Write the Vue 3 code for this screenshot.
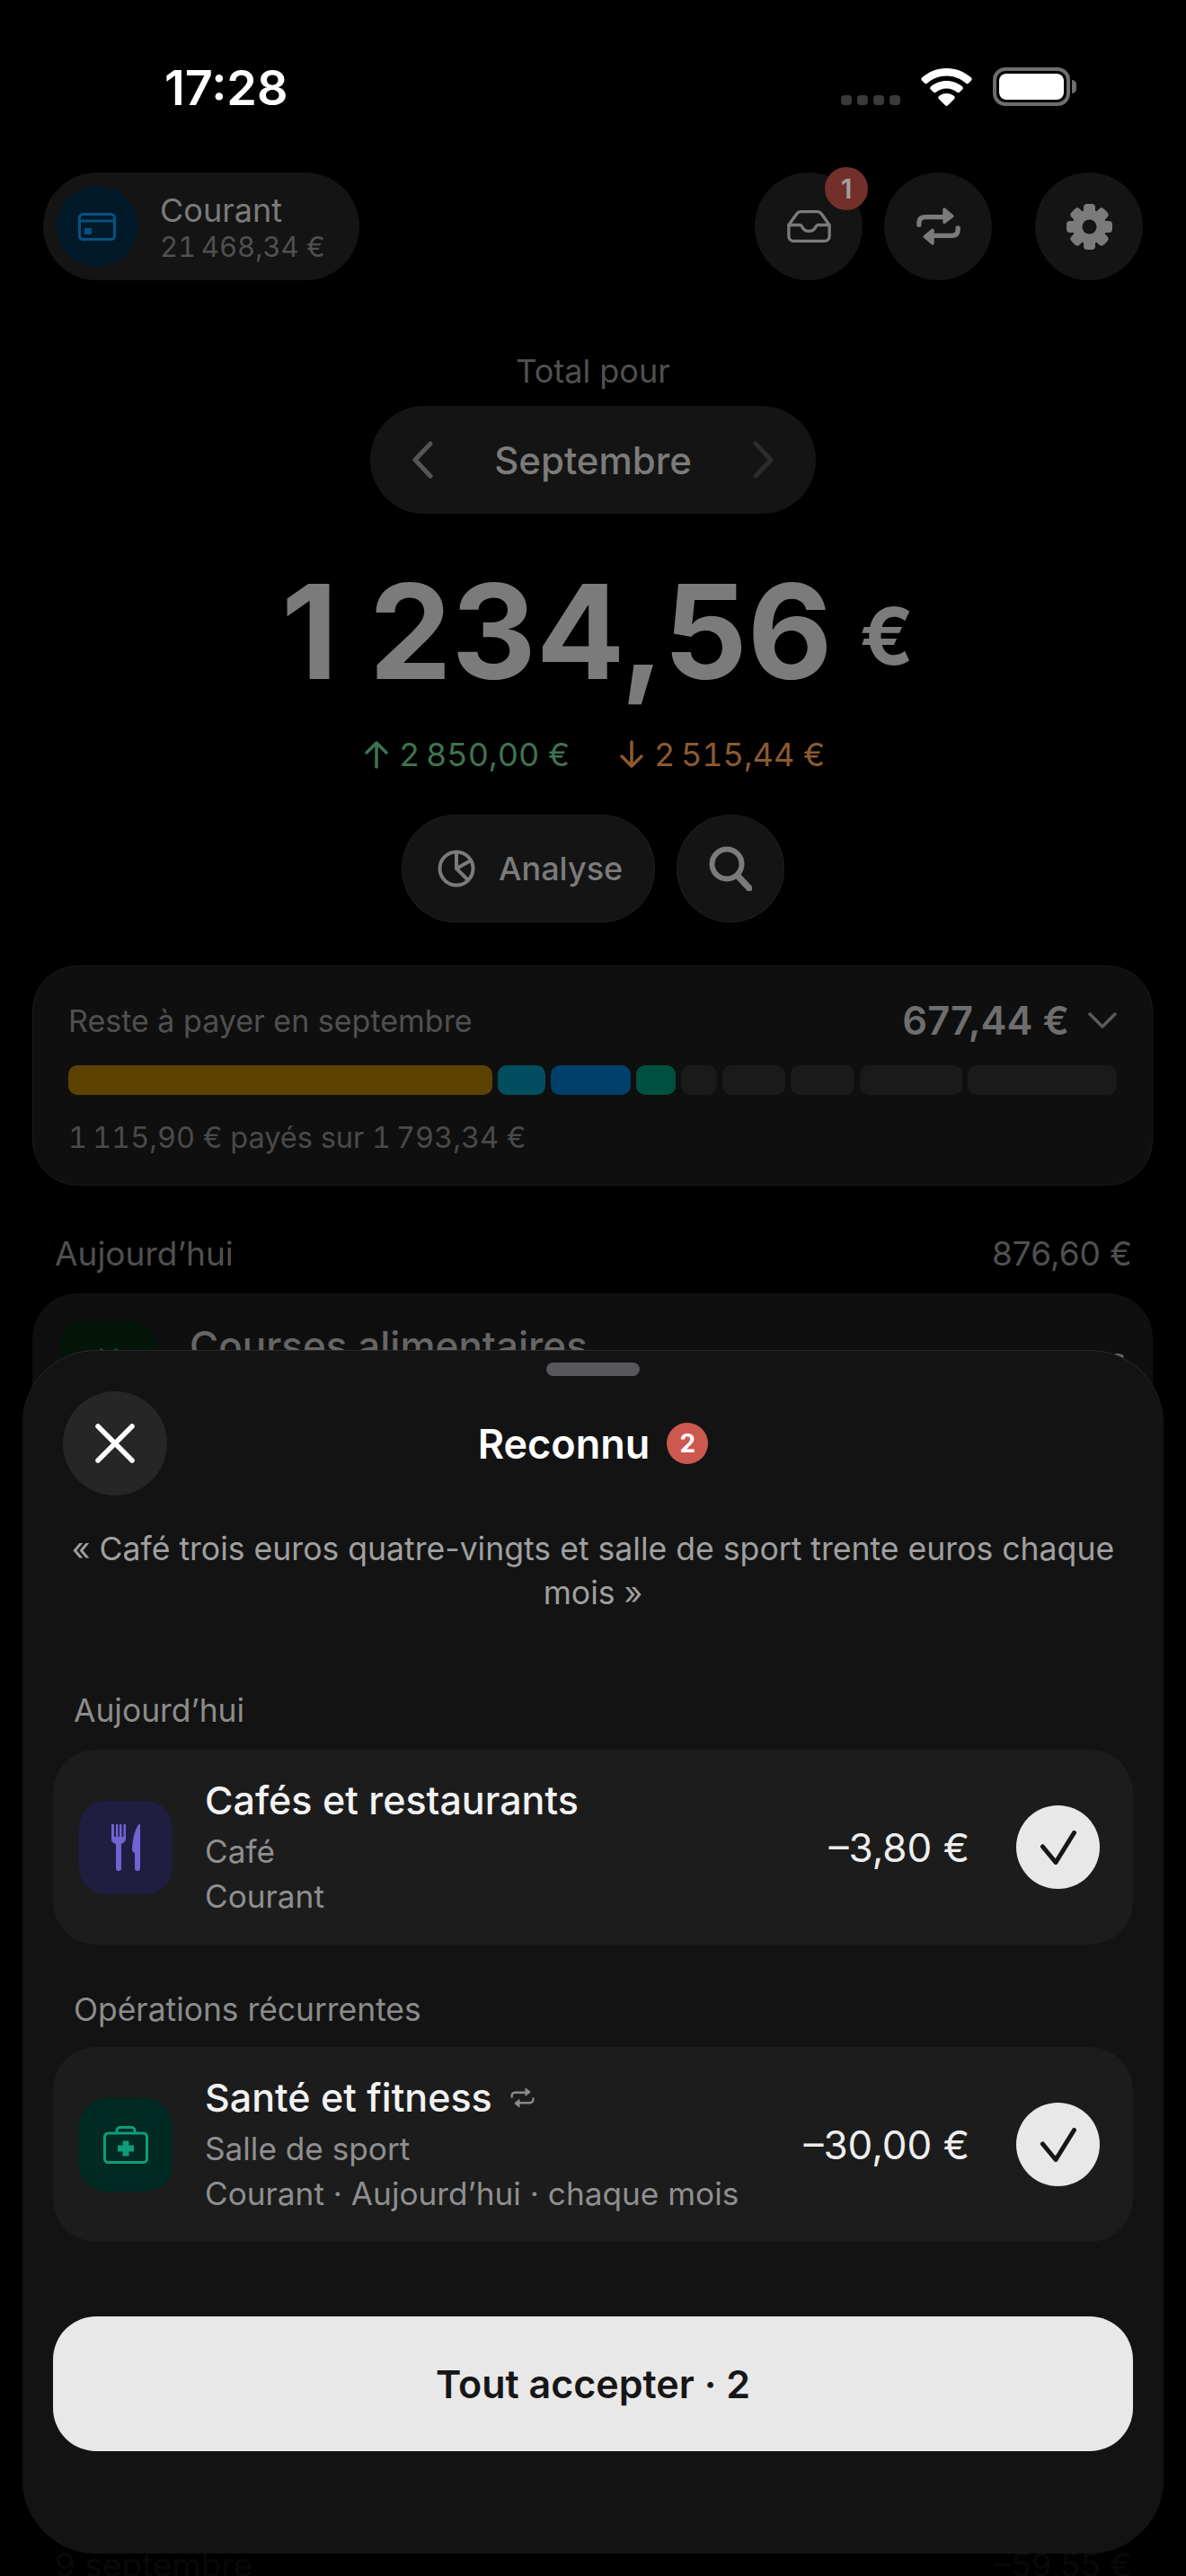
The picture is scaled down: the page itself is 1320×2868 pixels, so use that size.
<template>
  <div class="page">
    <div class="status">
      <span class="status__time">17:28</span>
      <div class="status__right">
        <div class="status__dots"><i /><i /><i /><i /></div>
        <svg class="status__wifi" viewBox="0 0 57 42" fill="#fff">
          <path d="M28.500 0C18 0 8.400 4 1 10.600c-.9.800-.9 2-.1 2.800l3.200 3.300c.8.800 2 .8 2.800.1C12.800 11.700 20.300 8.600 28.500 8.600s15.700 3.100 21.600 8.200c.8.700 2 .7 2.800-.1l3.200-3.300c.8-.8.800-2-.1-2.800C48.600 4 39 0 28.500 0z" />
          <path d="M28.500 14c-6.700 0-12.900 2.400-17.700 6.500-.9.800-.9 2.100-.1 2.900l3.200 3.200c.8.800 2 .8 2.800.2 3.200-2.600 7.300-4.200 11.800-4.200s8.600 1.600 11.800 4.200c.8.600 2 .6 2.800-.2l3.200-3.200c.8-.8.800-2.100-.1-2.900C41.400 16.400 35.200 14 28.500 14z" />
          <path d="M28.500 28c-3.200 0-6.200 1.100-8.500 3-.9.800-1 2.100-.2 2.900l7.200 7.400c.8.900 2.200.9 3 0l7.200-7.400c.8-.8.700-2.100-.2-2.900-2.300-1.900-5.300-3-8.500-3z" />
        </svg>
        <div class="status__battery"><div class="status__level" /></div>
      </div>
    </div>

    <header class="top">
      <div class="account">
        <div class="account__icon">
          <svg viewBox="0 0 42 31" width="42" height="31" fill="none" stroke="#05527f" stroke-width="3">
            <rect x="1.500" y="1.500" width="39" height="28" rx="4" />
            <path d="M2 9h38" />
            <rect x="7" y="17" width="8" height="7" rx="1" fill="#05527f" stroke="none" />
          </svg>
        </div>
        <div class="account__text">
          <span class="account__name">Courant</span>
          <span class="account__sum">21&#8239;468,34 €</span>
        </div>
      </div>
      <div class="top__actions">
        <button class="round round--inbox">
          <svg viewBox="0 0 147 109" width="49" height="36" fill="none" stroke="#7b7b7b" stroke-width="10" stroke-linejoin="round" stroke-linecap="round">
            <path d="M5 50 32 12a16 16 0 0 1 13-7h57a16 16 0 0 1 13 7l27 38v38a16 16 0 0 1-16 16H21A16 16 0 0 1 5 88z" />
            <path d="M5 50h37c4 0 6 2 8 6 4 9 12 15 23 15s19-6 23-15c2-4 4-6 8-6h37" />
          </svg>
          <span class="round__badge">1</span>
        </button>
        <button class="round">
          <svg viewBox="0 0 147 127" width="49" height="42" fill="#7b7b7b" stroke="#7b7b7b" stroke-linecap="round" stroke-linejoin="round">
            <path d="M8 58V52Q8 32 30 32H95" fill="none" stroke-width="16" />
            <path d="M93 6 120 29 93 50z" stroke-width="10" />
            <path d="M139 69v6Q139 95 117 95H52" fill="none" stroke-width="16" />
            <path d="M54 76 27 98 54 121z" stroke-width="10" />
          </svg>
        </button>
        <button class="round round--gear">
          <svg viewBox="-25.500 -25.500 51 51" width="51" height="51" fill="#7b7b7b">
            <circle r="19" />
            <rect
              v-for="deg in gearTeeth"
              :key="deg"
              x="-6.500"
              y="-25.500"
              width="13"
              height="13"
              rx="4"
              :transform="`rotate(${deg})`"
            />
            <circle r="8" fill="#141414" />
          </svg>
        </button>
      </div>
    </header>

    <section class="total">
      <div class="total__label">Total pour</div>
      <div class="month">
        <svg viewBox="0 0 24 44" width="24" height="44" fill="none" stroke="#555" stroke-width="5" stroke-linecap="round" stroke-linejoin="round"><path d="M21 4 4 22l17 18" /></svg>
        <span class="month__name">Septembre</span>
        <svg viewBox="0 0 24 44" width="24" height="44" fill="none" stroke="#2c2c2c" stroke-width="5" stroke-linecap="round" stroke-linejoin="round"><path d="M3 4l17 18L3 40" /></svg>
      </div>
      <div class="amount">
        <span class="amount__value">1 234,56</span>
        <span class="amount__cur">€</span>
      </div>
      <div class="flows">
        <span class="flow flow--in">
          <svg viewBox="0 0 26 32" width="26" height="32" fill="none" stroke="currentColor" stroke-width="3.500" stroke-linecap="round" stroke-linejoin="round"><path d="M13 30V3M2 14 13 3l11 11" /></svg>
          2&#8239;850,00 €
        </span>
        <span class="flow flow--out">
          <svg viewBox="0 0 26 32" width="26" height="32" fill="none" stroke="currentColor" stroke-width="3.500" stroke-linecap="round" stroke-linejoin="round"><path d="M13 2v27M2 18l11 11 11-11" /></svg>
          2&#8239;515,44 €
        </span>
      </div>
      <div class="tools">
        <button class="tool">
          <svg viewBox="0 0 42 42" width="42" height="42" fill="none" stroke="#7b7b7b" stroke-width="4" stroke-linejoin="round">
            <circle cx="21" cy="21" r="18.500" />
            <path d="M21 3v18l13 13M21 21 37 12" />
          </svg>
          <span>Analyse</span>
        </button>
        <button class="round round--line">
          <svg viewBox="0 0 48 50" width="48" height="50" fill="none" stroke="#7b7b7b" stroke-width="6" stroke-linecap="round">
            <circle cx="20" cy="20" r="16.500" />
            <path d="M32 33l13 14" stroke-width="7" />
          </svg>
        </button>
      </div>
    </section>

    <section class="bills">
      <div class="bills__head">
        <span class="bills__label">Reste à payer en septembre</span>
        <span class="bills__sum">677,44 €</span>
        <svg viewBox="0 0 32 20" width="32" height="20" fill="none" stroke="#5c5c5c" stroke-width="3.500" stroke-linecap="round" stroke-linejoin="round"><path d="M2 3l14 14L30 3" /></svg>
      </div>
      <div class="bills__bar">
        <span
          v-for="seg in segments"
          :key="seg.w + seg.color"
          class="bills__seg"
          :style="{ width: seg.w + 'px', background: seg.color }"
        />
      </div>
      <div class="bills__foot">1&#8239;115,90 € payés sur 1&#8239;793,34 €</div>
    </section>

    <div class="day">
      <span>Aujourd’hui</span>
      <span>876,60 €</span>
    </div>
    <section class="list">
      <div class="list__row">
        <div class="list__icon">
          <svg viewBox="0 0 20 50" width="20" height="50" fill="none" stroke="#0b5228" stroke-width="4" stroke-linecap="round"><path d="M2 3v4M18 3v4" /></svg>
        </div>
        <span class="list__title">Courses alimentaires</span>
        <span class="list__sum">€</span>
      </div>
    </section>
    <div class="day day--under">
      <span>9 septembre</span>
      <span>–59,55 €</span>
    </div>

    <!-- bottom sheet, sits over the page -->
    <div class="sheet">
      <div class="sheet__handle" />
      <div class="sheet__head">
        <button class="sheet__close">
          <svg viewBox="0 0 44 44" width="44" height="44" fill="none" stroke="#fff" stroke-width="5.500" stroke-linecap="round"><path d="M3 3l38 38M41 3 3 41" /></svg>
        </button>
        <div class="sheet__title">
          <span>Reconnu</span>
          <span class="sheet__count">2</span>
        </div>
      </div>
      <p class="sheet__quote">« Café trois euros quatre-vingts et salle de sport trente euros chaque mois »</p>

      <div class="sheet__section">Aujourd’hui</div>
      <div class="op">
        <div class="op__icon op__icon--food">
          <svg viewBox="0 0 32 52" width="32" height="52" fill="#7063d3">
            <path d="M0 1a1 1 0 0 1 3 0v13h2V1a1 1 0 0 1 2.500 0v13h1.500V1a1 1 0 0 1 2.500 0v13h2V1a1 1 0 0 1 2.500 0v15c0 3-2 5-5 6v27a3 3 0 0 1-6 0V22c-3-1-5.500-3-5.500-6z" />
            <path d="M32 1v48a3 3 0 0 1-6 0V32c-2-.5-3-2-3-4 0-8 3-23 7.500-28 .8-.6 1.500 0 1.500 1z" />
          </svg>
        </div>
        <div class="op__text">
          <div class="op__title">Cafés et restaurants</div>
          <div class="op__line">Café</div>
          <div class="op__line">Courant</div>
        </div>
        <div class="op__sum">–3,80 €</div>
        <div class="op__check">
          <svg viewBox="0 0 40 38" width="40" height="38" fill="none" stroke="#161616" stroke-width="5" stroke-linecap="round" stroke-linejoin="round"><path d="M2.500 18 17 35.500 37.500 2.500" /></svg>
        </div>
      </div>

      <div class="sheet__section sheet__section--next">Opérations récurrentes</div>
      <div class="op">
        <div class="op__icon op__icon--health">
          <svg viewBox="0 0 50 42" width="50" height="42" fill="none" stroke="#0f9c7a" stroke-width="3">
            <rect x="1.500" y="8" width="47" height="32.500" rx="4" />
            <path d="M15 8V5a3.500 3.500 0 0 1 3.500-3.500h13A3.500 3.500 0 0 1 35 5v3" />
            <path d="M25 16.500v17M16 25h18" stroke-width="7" />
          </svg>
        </div>
        <div class="op__text">
          <div class="op__title">
            Santé et fitness
            <svg class="op__repeat" viewBox="0 0 147 127" width="27" height="23" fill="#8a8a8a" stroke="#8a8a8a" stroke-linecap="round" stroke-linejoin="round">
              <path d="M8 58V52Q8 32 30 32H95" fill="none" stroke-width="13" />
              <path d="M93 6 120 29 93 50z" stroke-width="6" />
              <path d="M139 69v6Q139 95 117 95H52" fill="none" stroke-width="13" />
              <path d="M54 76 27 98 54 121z" stroke-width="6" />
            </svg>
          </div>
          <div class="op__line">Salle de sport</div>
          <div class="op__line">Courant · Aujourd’hui · chaque mois</div>
        </div>
        <div class="op__sum">–30,00 €</div>
        <div class="op__check">
          <svg viewBox="0 0 40 38" width="40" height="38" fill="none" stroke="#161616" stroke-width="5" stroke-linecap="round" stroke-linejoin="round"><path d="M2.500 18 17 35.500 37.500 2.500" /></svg>
        </div>
      </div>

      <button class="sheet__accept">Tout accepter · 2</button>
    </div>
  </div>
</template>

<script setup>
const gearTeeth = [0, 45, 90, 135, 180, 225, 270, 315]

const segments = [
  { w: 472, color: '#5c4200' },
  { w: 53, color: '#004e5f' },
  { w: 89, color: '#003f69' },
  { w: 44, color: '#005040' },
  { w: 40, color: '#1a1a1a' },
  { w: 70, color: '#1a1a1a' },
  { w: 71, color: '#1a1a1a' },
  { w: 114, color: '#1a1a1a' },
  { w: 166, color: '#1a1a1a' },
]
</script>

<style>
html, body {
  background: #000;
}
</style>

<style scoped>
.page {
  position: relative;
  width: 1320px;
  height: 2868px;
  overflow: hidden;
  background: #000;
  font-family: Inter, "Liberation Sans", sans-serif;
  color: #7b7b7b;
}

button {
  border: 0;
  padding: 0;
  font-family: inherit;
  cursor: pointer;
}

.status {
  display: flex;
  align-items: flex-start;
  justify-content: space-between;
  height: 192px;
  padding: 0 129px 0 183px;
  box-sizing: border-box;
}

.status__time {
  margin-top: 65px;
  font-size: 54px;
  line-height: 66px;
  font-weight: 600;
  color: #fff;
}

.status__right {
  display: flex;
  align-items: flex-end;
  margin-top: 75px;
}

.status__dots {
  display: flex;
  gap: 6px;
  margin-right: 23px;
  margin-bottom: 1px;
}

.status__dots i {
  width: 12px;
  height: 11px;
  border-radius: 4px;
  background: #3a3a3a;
}

.status__wifi {
  width: 57px;
  height: 42px;
}

.status__battery {
  position: relative;
  width: 86px;
  height: 43px;
  margin-left: 23px;
  box-sizing: border-box;
  border: 4px solid #6e6e6e;
  border-radius: 14px;
  padding: 3px;
}

.status__battery::after {
  content: "";
  position: absolute;
  right: -11px;
  top: 10px;
  width: 5px;
  height: 15px;
  border-radius: 0 5px 5px 0;
  background: #6e6e6e;
}

.status__level {
  height: 100%;
  border-radius: 8px;
  background: #fff;
}

.top {
  display: flex;
  justify-content: space-between;
  padding: 0 48px;
}

.account {
  display: flex;
  align-items: center;
  gap: 25px;
  width: 352px;
  height: 120px;
  box-sizing: border-box;
  padding-left: 15px;
  border-radius: 60px;
  background: #141414;
}

.account__icon {
  display: flex;
  align-items: center;
  justify-content: center;
  width: 90px;
  height: 90px;
  border-radius: 50%;
  background: #02192a;
}

.account__text {
  display: flex;
  flex-direction: column;
}

.account__name {
  font-size: 36px;
  line-height: 46px;
  color: #7b7b7b;
}

.account__sum {
  font-size: 31px;
  line-height: 36px;
  font-variant-numeric: tabular-nums;
  color: #505050;
}

.top__actions {
  display: flex;
}

.round {
  position: relative;
  display: flex;
  align-items: center;
  justify-content: center;
  width: 120px;
  height: 120px;
  border-radius: 50%;
  background: #141414;
}

.round--inbox {
  margin-right: 24px;
}

.round--gear {
  margin-left: 48px;
}

.round--line {
  box-shadow: inset 0 0 0 1px #1c1c1c;
}

.round__badge {
  position: absolute;
  top: -6px;
  right: -6px;
  width: 48px;
  height: 48px;
  border-radius: 50%;
  background: #73302a;
  color: #a0a0a0;
  font-size: 30px;
  font-weight: 600;
  line-height: 48px;
  text-align: center;
}

.total {
  display: flex;
  flex-direction: column;
  align-items: center;
}

.total__label {
  margin-top: 79px;
  font-size: 36px;
  line-height: 44px;
  color: #505050;
}

.month {
  display: flex;
  align-items: center;
  justify-content: space-between;
  width: 496px;
  height: 120px;
  box-sizing: border-box;
  margin-top: 17px;
  padding: 0 46px;
  border-radius: 60px;
  background: #141414;
}

.month__name {
  font-size: 42px;
  font-weight: 500;
  color: #7b7b7b;
}

.amount {
  display: flex;
  align-items: center;
  gap: 30px;
  height: 160px;
  margin-top: 51px;
  padding-left: 10px;
  color: #7b7b7b;
  font-weight: 700;
}

.amount__value {
  font-size: 146px;
  line-height: 160px;
}

.amount__cur {
  font-size: 88px;
  line-height: 160px;
  margin-top: 10px;
}

.flows {
  display: flex;
  gap: 56px;
  margin-top: 35px;
  padding-left: 4px;
  font-size: 36px;
  line-height: 44px;
  letter-spacing: .1px;
  font-variant-numeric: tabular-nums;
}

.flow {
  display: flex;
  align-items: center;
  gap: 12px;
}

.flow--in {
  color: #3f7350;
}

.flow--out {
  color: #8c5a30;
}

.tools {
  display: flex;
  gap: 24px;
  margin-top: 45px;
}

.tool {
  display: flex;
  align-items: center;
  gap: 26px;
  width: 282px;
  height: 120px;
  box-sizing: border-box;
  padding-left: 40px;
  border-radius: 60px;
  background: #141414;
  box-shadow: inset 0 0 0 1px #1c1c1c;
  color: #7b7b7b;
  font-size: 36px;
  font-weight: 500;
}

.bills {
  height: 245px;
  box-sizing: border-box;
  margin: 48px 37px 0 36px;
  padding: 36px 39px 0;
  border: 1px solid #1a1a1a;
  border-radius: 50px;
  background: #0f0f0f;
}

.bills__head {
  display: flex;
  align-items: center;
  height: 48px;
}

.bills__label {
  flex: 1;
  font-size: 34px;
  color: #505050;
}

.bills__sum {
  margin-right: 21px;
  font-size: 43.500px;
  font-weight: 600;
  color: #6e6e6e;
}

.bills__bar {
  display: flex;
  gap: 6px;
  margin-top: 26px;
}

.bills__seg {
  height: 33px;
  border-radius: 10px;
}

.bills__foot {
  margin-top: 28px;
  font-size: 32.500px;
  line-height: 40px;
  font-variant-numeric: tabular-nums;
  color: #4a4a4a;
}

.day {
  display: flex;
  justify-content: space-between;
  margin-top: 54px;
  padding: 0 60px 0 61px;
  font-size: 37px;
  line-height: 44px;
  color: #505050;
}

.list {
  height: 1394px;
  margin: 22px 37px 0 36px;
  border-radius: 50px;
  background: #0f0f0f;
  overflow: hidden;
}

.list__row {
  display: flex;
  gap: 36px;
  padding: 30px 30px 0;
}

.list__icon {
  display: flex;
  flex: none;
  justify-content: center;
  align-items: center;
  width: 109px;
  height: 109px;
  border-radius: 30px;
  background: #04150a;
}

.list__title {
  margin-top: 3px;
  font-size: 44px;
  line-height: 50px;
  font-weight: 500;
  color: #666;
}

.list__sum {
  margin-left: auto;
  padding-top: 28px;
  font-size: 36px;
  line-height: 44px;
  color: #666;
}

.day--under {
  margin-top: 0;
  color: #090909;
}

.sheet {
  position: absolute;
  left: 25px;
  top: 1503px;
  width: 1270px;
  height: 1340px;
  box-sizing: border-box;
  padding: 14px 34px 0;
  border-radius: 82px;
  background: #131313;
  box-shadow: inset 0 1px 0 #2a2a2a;
}

.sheet__handle {
  width: 104px;
  height: 15px;
  margin: 0 auto;
  border-radius: 8px;
  background: #58585c;
}

.sheet__head {
  position: relative;
  display: flex;
  justify-content: center;
  align-items: center;
  height: 116px;
  margin-top: 17px;
}

.sheet__close {
  position: absolute;
  left: 11px;
  top: 0;
  display: flex;
  align-items: center;
  justify-content: center;
  width: 116px;
  height: 116px;
  border-radius: 50%;
  background: #262626;
}

.sheet__title {
  display: flex;
  align-items: center;
  gap: 19px;
  font-size: 45px;
  font-weight: 600;
  color: #fff;
}

.sheet__count {
  width: 46px;
  height: 46px;
  border-radius: 50%;
  background: #cc5850;
  font-size: 28px;
  font-weight: 700;
  line-height: 46px;
  text-align: center;
}

.sheet__quote {
  margin: 35px 0 0;
  font-size: 35.600px;
  line-height: 49px;
  text-align: center;
  color: #a0a0a0;
}

.sheet__section {
  margin-top: 85px;
  padding-left: 23px;
  font-size: 35.400px;
  line-height: 44px;
  color: #8c8c8c;
}

.sheet__section--next {
  margin-top: 51px;
}

.sheet__section + .op {
  margin-top: 21px;
}

.sheet__section--next + .op {
  margin-top: 19px;
}

.op {
  display: flex;
  align-items: center;
  height: 217px;
  box-sizing: border-box;
  padding: 0 37px 0 29px;
  border-radius: 48px;
  background: #1c1c1c;
}

.op__icon {
  display: flex;
  flex: none;
  align-items: center;
  justify-content: center;
  width: 104px;
  height: 104px;
  border-radius: 30px;
}

.op__icon--food {
  background: #1f1e40;
}

.op__icon--health {
  background: #012a22;
}

.op__text {
  flex: 1;
  margin-left: 36px;
}

.op__title {
  display: flex;
  align-items: center;
  gap: 20px;
  margin-bottom: 5px;
  font-size: 43px;
  line-height: 54px;
  font-weight: 500;
  color: #f2f2f2;
}

.op__line {
  font-size: 35.200px;
  line-height: 50px;
  color: #8f8f8f;
}

.op__sum {
  margin-right: 52px;
  font-size: 44px;
  color: #eee;
}

.op__check {
  display: flex;
  flex: none;
  align-items: center;
  justify-content: center;
  width: 93px;
  height: 93px;
  border-radius: 50%;
  background: #e8e8e8;
}

.sheet__accept {
  display: block;
  width: 100%;
  height: 150px;
  margin-top: 83px;
  border-radius: 48px;
  background: #e8e8e8;
  color: #161616;
  font-size: 43px;
  font-weight: 600;
}
</style>
